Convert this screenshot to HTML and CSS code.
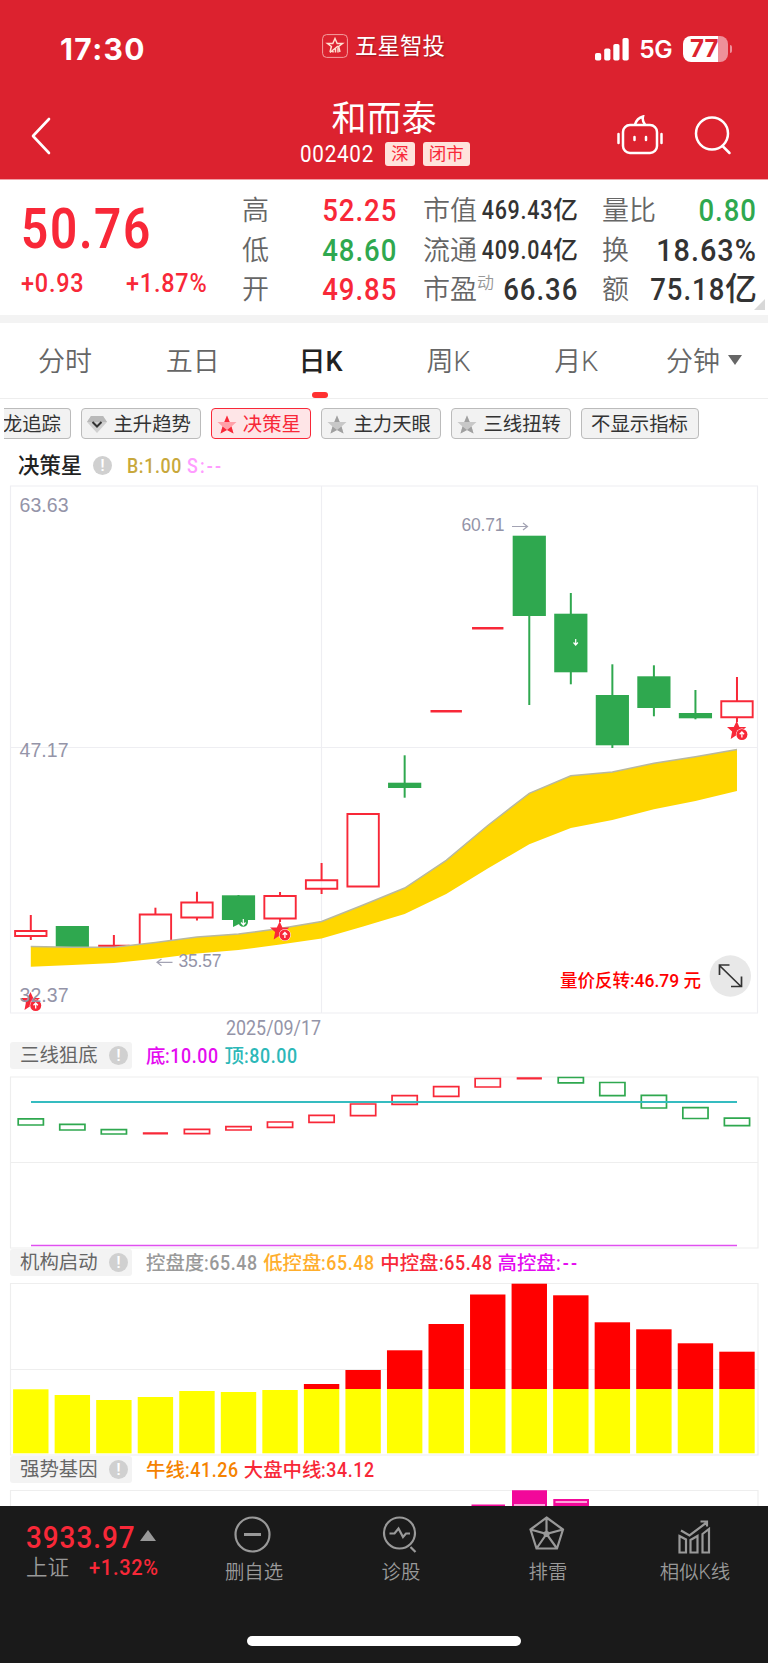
FILE: index.html
```html
<!DOCTYPE html>
<html lang="zh-CN">
<head>
    <meta charset="UTF-8">
    <meta name="viewport" content="width=device-width, initial-scale=1.0">
    <title>和而泰 002402</title>
    <link rel="stylesheet" href="styles.css">
</head>
<body>
    <div class="phone">
        <header class="top">
            <!-- 状态栏 -->
            <div class="status-bar">
                <span class="clock">17:30</span>
                <div class="app-name">
                    <svg width="26" height="24" viewBox="0 0 26 24" fill="none" stroke="#ffe0d0">
                        <rect x=".6" y=".6" width="24.8" height="22.8" rx="4" stroke="#f3a0a0"/>
                        <path d="M8 18l1.400-5.500L5.500 9.500h5.300L13 4.500l2.200 5h5.300l-3.900 3 1.400 5.500" stroke-width="1.500"/>
                        <path d="M8 18.500l8-6.500M11 18.500v-3M13.500 18.500v-4.500M16 18.500v-5" stroke-width="1.500"/>
                    </svg>
                    <span>五星智投</span>
                </div>
                <div class="phone-state">
                    <svg width="34" height="23" viewBox="0 0 34 23" fill="#fff">
                        <rect x="0" y="15" width="6.200" height="7.500" rx="1.800"/>
                        <rect x="9.200" y="10.500" width="6.200" height="12" rx="1.800"/>
                        <rect x="18.300" y="6" width="6.200" height="16.500" rx="1.800"/>
                        <rect x="27.500" y="0" width="6.200" height="22.500" rx="1.800"/>
                    </svg>
                    <span class="network">5G</span>
                    <span class="battery">77</span>
                </div>
            </div>

            <!-- 股票名称 -->
            <div class="title-bar">
                <svg class="back" width="20" height="38" viewBox="0 0 20 38" fill="none" stroke="#fff" stroke-width="2.600" stroke-linecap="round" stroke-linejoin="round">
                    <path d="M18 2L2 19l16 17"/>
                </svg>
                <div class="stock">
                    <h1>和而泰</h1>
                    <div class="stock-sub">
                        <span class="stock-code"><span class="din">002402</span></span>
                        <span class="tag">深</span>
                        <span class="tag">闭市</span>
                    </div>
                </div>
                <div class="actions">
                    <svg width="46" height="40" viewBox="0 0 46 40" fill="none" stroke="#fff" stroke-width="2.500" stroke-linecap="round">
                        <rect x="6" y="10" width="34" height="28" rx="7"/>
                        <path d="M18 9.500Q20 3 26 1.500Q25 6 28 9.500M1.500 19v9M44.500 19v9M17.500 22v3M29 22v3"/>
                    </svg>
                    <svg width="38" height="40" viewBox="0 0 38 40" fill="none" stroke="#fff" stroke-width="2.500" stroke-linecap="round">
                        <circle cx="18" cy="18.500" r="16"/>
                        <path d="M28.500 31l7 7"/>
                    </svg>
                </div>
            </div>
        </header>

        <!-- 行情 -->
        <section class="quote">
            <div class="quote-main">
                <div class="price"><span class="din">50.76</span></div>
                <div class="change">
                    <span class="din">+0.93</span>
                    <span class="din">+1.87%</span>
                </div>
            </div>
            <dl class="quote-col col-a">
                <div><dt>高</dt><dd class="up"><span class="din">52.25</span></dd></div>
                <div><dt>低</dt><dd class="down"><span class="din">48.60</span></dd></div>
                <div><dt>开</dt><dd class="up"><span class="din">49.85</span></dd></div>
            </dl>
            <dl class="quote-col col-b">
                <div><dt>市值</dt><dd class="small"><span class="din">469.43</span>亿</dd></div>
                <div><dt>流通</dt><dd class="small"><span class="din">409.04</span>亿</dd></div>
                <div><dt>市盈<sup>动</sup></dt><dd><span class="din">66.36</span></dd></div>
            </dl>
            <dl class="quote-col col-c">
                <div><dt>量比</dt><dd class="down"><span class="din">0.80</span></dd></div>
                <div><dt>换</dt><dd><span class="din wide">18.63%</span></dd></div>
                <div><dt>额</dt><dd><span class="din">75.18</span>亿</dd></div>
            </dl>
        </section>

        <nav class="tabs">
            <span>分时</span>
            <span>五日</span>
            <span class="active">日K</span>
            <span>周K</span>
            <span>月K</span>
            <span>分钟<i class="caret"></i></span>
        </nav>

        <!-- 指标选择 -->
        <div class="chips">
            <span class="chip chip-cut">龙追踪</span>
            <span class="chip">
                <svg width="20" height="19" viewBox="0 0 20 19"><path d="M4 1h12l4 6-10 11L0 7z" fill="#d0d0d0"/><path d="M4 1h12l4 6H0z" fill="#b9b9b9"/><path d="M5.500 7l4.500 4.500L14.500 7" fill="none" stroke="#333" stroke-width="2"/></svg>
                主升趋势
            </span>
            <span class="chip chip-on">
                <svg width="20" height="19" viewBox="0 0 20 19"><use href="#chip-star" fill="#ffa0a8"/><path d="M10 .5l2.700 6.500H7.300zM3.500 18.500l2-7L10 15zM16.500 18.500l-2-7L10 15z" fill="#f82838"/></svg>
                决策星
            </span>
            <span class="chip">
                <svg width="20" height="19" viewBox="0 0 20 19"><use href="#chip-star" fill="#c8c8c8"/><path d="M10 .5l2.700 6.500H7.300zM3.500 18.500l2-7L10 15zM16.500 18.500l-2-7L10 15z" fill="#a0a0a0"/></svg>
                主力天眼
            </span>
            <span class="chip">
                <svg width="20" height="19" viewBox="0 0 20 19"><use href="#chip-star" fill="#c8c8c8"/><path d="M10 .5l2.700 6.500H7.300zM3.500 18.500l2-7L10 15zM16.500 18.500l-2-7L10 15z" fill="#a0a0a0"/></svg>
                三线扭转
            </span>
            <span class="chip chip-off">不显示指标</span>
        </div>

        <div class="legend legend-main">
            <span class="legend-name">决策星</span><i class="info">!</i>
            <span class="values"><b class="gold"><span class="din">B:1.00</span></b><b class="pink"><span class="din dash">S:--</span></b></span>
        </div>

        <!-- K线主图 -->
        <svg class="chart" id="kline" width="768" height="556" viewBox="0 484 768 556">
            <defs>
                <path id="chip-star" d="M10 .5l2.700 6.500H19.500l-5 4.500 2 7-6.500-3.500-6.500 3.500 2-7L.5 7h6.800z"/>
                <g id="buy">
                    <path d="M0-9L2.700-3.100 9.600-2.900 4.400 1.500 6 8.500 0 5-6 9-4.600 1.500-9.700-2.900-2.900-3.100z" fill="#f82838"/>
                    <circle cx="5.200" cy="4.500" r="6" fill="#fff"/>
                    <circle cx="5.200" cy="4.500" r="5.500" fill="#f82838"/>
                    <path d="M5.200 7.500v-5M3 4.200l2.200-2.200 2.200 2.200" fill="none" stroke="#fff" stroke-width="1.300"/>
                </g>
            </defs>
            <path class="grid" d="M10.500 486H757.500V1013H10.500zM321.500 486V1013M10.500 747.500H757.500"/>
            <g id="candles"></g>
            <path id="band" fill="#ffd700"/>
            <path id="band-top" fill="none" stroke="#b8b8a0" stroke-width="1.500"/>
            <!-- 卖出标记，被K线遮住一半 -->
            <path d="M233 919h5l1 5-6 3zM238 919h10v3a4.800 4.800 0 0 1-9.600 0z" fill="#2fa84f"/>
            <path d="M243.300 919v6M241 922.500l2.300 2.500 2.300-2.500M575.700 639v6M573.500 642.500l2.200 2.500 2.200-2.500" fill="none" stroke="#fff" stroke-width="1.200"/>
            <use href="#buy" x="279.700" y="930.500"/>
            <use href="#buy" x="30.500" y="1001"/>
            <use href="#buy" x="736.700" y="730"/>
            <g class="axis">
                <text x="19.500" y="512" textLength="49">63.63</text>
                <text x="19.500" y="757" textLength="49">47.17</text>
                <text x="19.500" y="1002" textLength="49">32.37</text>
                <text class="mark" x="461.500" y="531" textLength="43">60.71</text>
                <text class="mark" x="178.500" y="967" textLength="43">35.57</text>
                <text class="date" x="226" y="1035" textLength="95" lengthAdjust="spacingAndGlyphs">2025/09/17</text>
            </g>
            <path d="M512 526.500h15M523 523l4.500 3.500-4.500 3.500M172.500 962.300H158M161.500 959l-4.500 3.300 4.500 3.500" fill="none" stroke="#a3a3b3" stroke-width="1.200"/>
            <text class="reversal" x="560" y="986.500" textLength="141" lengthAdjust="spacingAndGlyphs">量价反转:46.79 元</text>
            <circle cx="730.300" cy="976" r="20.700" fill="#e8e8e8"/>
            <path d="M719.500 965.500l21.500 21M719.500 975v-10h10M731 986.500h10.500v-10" fill="none" stroke="#333" stroke-width="1.700"/>
        </svg>

        <div class="legend">
            <span class="legend-box"><span>三线狙底</span><i class="info">!</i></span>
            <span class="values"><b class="magenta">底<span class="din">:10.00</span></b><b class="teal">顶<span class="din">:80.00</span></b></span>
        </div>
        <svg class="chart" width="768" height="174" viewBox="0 1075 768 174">
            <path class="grid grid-sub" d="M10.500 1077H758V1248H10.500zM10.500 1162.500H758"/>
            <g id="boxes"></g>
            <path d="M31 1102H737" stroke="#35bcc0" stroke-width="2"/>
            <path d="M31 1245.500H737" stroke="#e050f0" stroke-width="1.500"/>
        </svg>

        <div class="legend legend-tight">
            <span class="legend-box"><span>机构启动</span><i class="info">!</i></span>
            <span class="values"><b class="gray">控盘度<span class="din">:65.48</span></b><b class="orange">低控盘<span class="din">:65.48</span></b><b class="red">中控盘<span class="din">:65.48</span></b><b class="magenta">高控盘<span class="din dash">:--</span></b></span>
        </div>
        <svg class="chart" width="768" height="174" viewBox="0 1282 768 174">
            <path class="grid grid-sub" d="M10.500 1283.500H758V1455H10.500zM10.500 1369.500H758"/>
            <g id="bars"></g>
        </svg>

        <div class="legend legend-tight">
            <span class="legend-box"><span>强势基因</span><i class="info">!</i></span>
            <span class="values"><b class="amber">牛线<span class="din">:41.26</span></b><b class="red">大盘中线<span class="din">:34.12</span></b></span>
        </div>
        <svg class="chart" width="768" height="17" viewBox="0 1489 768 17">
            <path class="grid grid-sub" d="M10.500 1506V1490.500H758V1506"/>
            <path d="M471.500 1504.500h33.500v2h-33.500zM512 1490.300h35v16h-35zM553.300 1499h35.700v8h-35.700z" fill="#f2089a"/>
            <path d="M514 1505h31M555.500 1502h31.500" stroke="#ffd8f0" stroke-width="1.500"/>
        </svg>

        <!-- 底部工具栏 -->
        <footer class="bottom">
            <div class="index">
                <div class="index-price"><span class="din">3933.97</span><i class="rise"></i></div>
                <div class="index-sub"><span>上证</span><span class="din">+1.32%</span></div>
            </div>
            <div class="tool">
                <svg width="40" height="40" viewBox="0 0 40 40"><circle cx="18.500" cy="19.500" r="17"/><path d="M10 19.500h17" stroke-width="3"/></svg>
                <span>删自选</span>
            </div>
            <div class="tool">
                <svg width="40" height="40" viewBox="0 0 40 40"><circle cx="18.500" cy="18" r="15.500"/><path d="M8.500 18.500h5l4-5 4.500 8.500 3-3.500h4M29.500 32l5 5"/></svg>
                <span>诊股</span>
            </div>
            <div class="tool">
                <svg width="40" height="40" viewBox="0 0 40 40"><path d="M18.500 2.500L35 14.500 29 33.500H8.500L2.500 14.500zM18.500 2.500V19M35 14.500L18.500 19 29 33.500M8.500 33.500L18.500 19 2.500 14.500"/><circle cx="18.500" cy="19" r="2"/></svg>
                <span>排雷</span>
            </div>
            <div class="tool">
                <svg width="40" height="40" viewBox="0 0 40 40"><path d="M4.500 21l6.500 3.500V37.500H4.500zM15.500 25l7-4V37.500h-7zM27.500 19l6.500-5V37.500h-6.500zM6 15.500l8.500 5L31 8M25.500 6.500h6.500v5"/></svg>
                <span>相似K线</span>
            </div>
        </footer>
        <div class="home-indicator"></div>
    </div>

    <script>
        const RED = '#f82838', GREEN = '#2fa84f';
        const cx = i => 30.8 + 41.54 * i;

        // [颜色, 最高, 实体上沿, 实体下沿, 最低]
        const candles = [
            ['r', 915, 931, 936, 940], ['g', 926, 926, 948, 948], ['r', 935, 946, 946, 948],
            ['r', 907.7, 914.5, 950, 950], ['r', 891.7, 902.5, 917.5, 920.5], ['g', 895, 895.3, 920, 920],
            ['r', 892, 896, 918.5, 922], ['r', 863, 880.3, 888.7, 894], ['r', 814, 814, 886.5, 887],
            ['g', 755.3, 782.7, 788, 797.7], ['r', 711.3, 711.3, 711.3, 711.3], ['r', 628.2, 628.2, 628.2, 628.2],
            ['g', 536, 535.7, 616, 705], ['g', 593, 613.7, 672.3, 684.3], ['g', 664.3, 695, 745.3, 748],
            ['g', 665.3, 676.3, 708, 716.3], ['g', 690, 713, 718.3, 719.3], ['r', 677, 701.3, 717.3, 722]
        ];
        document.getElementById('candles').innerHTML = candles.map(([c, h, t, b, l], i) => {
            const x = cx(i);
            if (c === 'g') {
                return `<path d="M${x} ${h}V${l}" stroke="${GREEN}" stroke-width="2"/>
                    <rect x="${x - 16.6}" y="${t}" width="33.2" height="${b - t}" fill="${GREEN}"/>`;
            }
            return `<path d="M${x} ${h}V${t}M${x} ${b}V${l}" stroke="${RED}" stroke-width="2"/>
                <path d="M${x - 15.7} ${t}h31.4V${b}h-31.4z" fill="none" stroke="${RED}" stroke-width="${t === b ? 2.5 : 1.9}"/>`;
        }).join('');

        const upper = [946.5, 947.3, 947.3, 942.5, 937, 934, 928.5, 921.5, 905, 888, 860.3, 825.5, 793.3, 775.7, 772, 763.3, 756.7, 749.5];
        const lower = [966.7, 965, 963, 958.7, 953.5, 950, 944.5, 938.5, 926.5, 914, 894, 868.5, 844.3, 828, 820, 809.3, 801, 791];
        const top_ = upper.map((y, i) => `${cx(i)} ${y}`);
        const low_ = lower.map((y, i) => `${cx(i)} ${y}`).reverse();
        document.getElementById('band').setAttribute('d', 'M' + top_.concat(low_).join('L') + 'z');
        document.getElementById('band-top').setAttribute('d', 'M' + top_.join('L'));

        // 三线狙底
        const boxes = [
            ['g', 1118.9, 1125], ['g', 1124.3, 1130], ['g', 1129.6, 1134], ['r', 1133.3, 1133.3], ['r', 1129.3, 1133.7],
            ['r', 1126.7, 1130], ['r', 1122, 1127.3], ['r', 1115.3, 1122.3], ['r', 1104, 1115.7], ['r', 1095.7, 1104.3],
            ['r', 1086.7, 1096.3], ['r', 1078.5, 1087], ['r', 1078.3, 1078.3], ['g', 1077.5, 1082.8], ['g', 1082.5, 1095.7],
            ['g', 1095.3, 1108], ['g', 1107.7, 1118.5], ['g', 1118.2, 1125.7]
        ];
        document.getElementById('boxes').innerHTML = boxes.map(([c, t, b], i) =>
            `<path d="M${cx(i) - 12.6} ${t}h25.2V${b}h-25.2z" fill="none" stroke="${c === 'r' ? RED : GREEN}" stroke-width="${t === b ? 2.3 : 1.7}"/>`
        ).join('');

        // 机构启动
        const yellow = [1389.3, 1395, 1400, 1397, 1391, 1392, 1390];
        const red = [1384, 1370, 1350.3, 1324, 1294.5, 1283.7, 1295.3, 1322.3, 1329.3, 1343.3, 1351.7];
        let bars = '';
        for (let i = 0; i < 18; i++) {
            const y = yellow[i] || 1389;
            bars += `<rect x="${cx(i) - 17.7}" y="${y}" width="35.4" height="${1453.3 - y}" fill="#ff0"/>`;
            if (i > 6) {
                bars += `<rect x="${cx(i) - 17.7}" y="${red[i - 7]}" width="35.4" height="${1389 - red[i - 7]}" fill="#f00"/>`;
            }
        }
        document.getElementById('bars').innerHTML = bars;
    </script>
</body>
</html>
```

FILE: styles.css
```css
* {
    box-sizing: border-box;
}

body {
    margin: 0;
    background: #fff;
    font-family: Roboto, "Noto Sans CJK SC", sans-serif;
    color: #333;
}

h1, dl, dt, dd {
    margin: 0;
    font-weight: normal;
}

svg {
    display: block;
    flex: none;
}

.phone {
    position: relative;
    width: 768px;
    height: 1663px;
    overflow: hidden;
}

/* 窄体数字 */
.din {
    display: inline-block;
    font-family: Roboto, "Noto Sans CJK SC", sans-serif;
    letter-spacing: 0.035em;
    transform: scaleX(0.86);
    transform-origin: right center;
}

.din.wide {
    transform: scaleX(0.9);
}

/* 顶部 */
.top {
    height: 180px;
    background: #dc222f;
    border-bottom: 1px solid #f0a0a6;
    color: #fff;
}

.status-bar {
    display: grid;
    grid-template-columns: 1fr auto 1fr;
    align-items: center;
    height: 98px;
    padding: 0 36px 0 60px;
}

.clock {
    font-family: Inter, sans-serif;
    font-size: 30px;
    font-weight: 700;
    letter-spacing: 1.4px;
}

.app-name {
    display: flex;
    align-items: center;
    gap: 7px;
    margin-left: -25px;
    margin-top: -6px;
    font-size: 22.5px;
    line-height: 26px;
    text-shadow: 1px 1px 2px rgba(0, 0, 0, 0.3);
}

.phone-state {
    display: flex;
    align-items: center;
    justify-content: flex-end;
}

.network {
    margin: 0 11px 0 10px;
    font-family: Inter, sans-serif;
    font-size: 24.5px;
    font-weight: 600;
    letter-spacing: -0.5px;
}

.battery {
    position: relative;
    width: 45px;
    height: 26px;
    margin-right: 4px;
    border-radius: 8px;
    background: linear-gradient(to right, #fff 77%, #ee909a 77%);
    color: #dc222f;
    font-family: Inter, sans-serif;
    font-size: 24px;
    font-weight: 700;
    line-height: 26px;
    padding-left: 7px;
}

.battery::after {
    content: "";
    position: absolute;
    right: -4px;
    top: 9px;
    width: 2px;
    height: 8px;
    border-radius: 0 3px 3px 0;
    background: #ee909a;
}

.title-bar {
    display: grid;
    grid-template-columns: 1fr auto 1fr;
    height: 80px;
    padding: 0 36px 0 31px;
}

.back {
    margin-top: 19px;
}

.stock {
    margin-left: 5px;
}

.stock h1 {
    padding-top: 2px;
    font-size: 35px;
    font-weight: 400;
    line-height: 40px;
    text-align: center;
}

.stock-sub {
    display: flex;
    align-items: center;
    gap: 8px;
    height: 25px;
    margin-top: 1px;
}

.stock-code {
    width: 76px;
    margin-right: 3px;
    font-size: 24px;
    text-align: right;
}

.stock-code .din {
    margin-left: -20px;
}

.tag {
    height: 24px;
    padding: 0 6px;
    border-radius: 3px;
    background: #ffe4dc;
    color: #f82838;
    font-size: 17.5px;
    line-height: 24px;
}

.actions {
    display: flex;
    justify-content: flex-end;
    gap: 31px;
    padding-top: 17px;
}

/* 行情 */
.quote {
    position: relative;
    display: flex;
    height: 143px;
    border-bottom: 8px solid #f3f3f3;
}

.quote::after {
    content: "";
    position: absolute;
    right: 3px;
    bottom: 5px;
    border-left: 11px solid transparent;
    border-bottom: 11px solid #d8d8d8;
}

.quote-main {
    width: 222px;
    padding: 21px 0 0 21px;
    color: #f82838;
}

.quote-main .din {
    transform-origin: left center;
}

.price {
    height: 58px;
    font-size: 55.5px;
    font-weight: 600;
    line-height: 58px;
}

.change {
    display: grid;
    grid-template-columns: 105px auto;
    margin-top: 7px;
    font-size: 26px;
    font-weight: 500;
    line-height: 34px;
}

.change .din {
    transform: scaleX(0.9);
}

.quote-col {
    display: grid;
    grid-template-rows: repeat(3, 39.5px);
    align-content: start;
    padding-top: 10px;
    font-size: 27px;
    line-height: 40px;
}

.quote-col > div {
    display: flex;
    justify-content: space-between;
}

.quote-col dt {
    padding-top: 1px;
    color: #666;
    font-weight: 350;
    white-space: nowrap;
}

.quote-col dd {
    font-size: 32px;
    font-weight: 500;
    white-space: nowrap;
}

.quote-col dd.small {
    padding-top: 1px;
    font-size: 25px;
}

.quote-col dd .din {
    margin-left: -30px;
}

.quote-col sup {
    font-size: 17px;
    line-height: 0;
    color: #999;
}

.col-a {
    width: 155px;
    margin-left: 20px;
}

.col-b {
    width: 155px;
    margin-left: 26px;
}

.col-c {
    width: 155px;
    margin-left: 24px;
}

.up {
    color: #f82838;
}

.down {
    color: #2fa84f;
}

.tabs {
    display: grid;
    grid-template-columns: repeat(6, 1fr);
    height: 76px;
    padding-left: 1px;
    border-bottom: 1px solid #eee;
    color: #666;
    font-size: 27px;
    font-weight: 350;
    line-height: 79px;
    text-align: center;
}

.tabs .active {
    position: relative;
    color: #222;
    font-weight: 500;
}

.tabs .active::after {
    content: "";
    position: absolute;
    left: 55px;
    bottom: 4px;
    width: 16px;
    height: 6px;
    border-radius: 3px;
    background: #ff3030;
}

.caret {
    display: inline-block;
    margin-left: 8px;
    vertical-align: 6px;
    border: 7px solid transparent;
    border-top: 10px solid #666;
    border-bottom: 0;
}

/* 指标选择 */
.chips {
    display: flex;
    gap: 10px;
    height: 48px;
    margin-left: 4px;
    padding-top: 9px;
    overflow: hidden;
}

.chip {
    display: flex;
    align-items: center;
    justify-content: space-between;
    flex: none;
    width: 120px;
    height: 31px;
    padding: 2px 9px 0 5px;
    border: 1.5px solid #bbb;
    border-radius: 4px;
    background: #f2f2f2;
    font-size: 19.4px;
    line-height: 28px;
    white-space: nowrap;
}

.chip-cut {
    width: 67px;
    padding: 2px 9px 0 0;
    border-left: 0;
    border-radius: 0 4px 4px 0;
    justify-content: flex-end;
}

.chip-on {
    width: 100px;
    border-color: #f82838;
    background: #fee5e7;
    color: #f82838;
}

.chip-off {
    width: 118px;
    padding: 2px 9px 0;
}

/* 图例 */
.legend {
    display: flex;
    height: 35px;
    padding: 2px 0 0 10px;
    font-size: 19.4px;
    line-height: 28px;
}

.legend-tight {
    height: 33px;
    padding-top: 0;
}

.legend-box {
    display: flex;
    align-items: center;
    justify-content: space-between;
    width: 122px;
    height: 27px;
    margin-right: 14px;
    padding: 0 4px 0 10px;
    border-radius: 3px;
    background: #f3f3f3;
    color: #666;
}

.legend-main {
    height: 37px;
    align-items: center;
    padding: 0 0 0 18px;
}

.legend-name {
    width: 75px;
    font-size: 21.4px;
    font-weight: 500;
    color: #222;
}

.legend-main .values {
    margin-left: 15px;
    padding-top: 2px;
}

.info {
    width: 19px;
    height: 19px;
    border-radius: 50%;
    background: #d0d0d0;
    color: #fff;
    font-size: 17px;
    font-style: normal;
    font-weight: 500;
    line-height: 19px;
    text-align: center;
}

.values {
    display: flex;
    gap: 4.5px;
}

.values b {
    font-weight: 500;
    white-space: nowrap;
}

.values .din {
    font-size: 20px;
    transform: scaleX(0.89);
    transform-origin: left center;
    margin-right: -6px;
}

.values .dash {
    letter-spacing: 0.12em;
}

.gold { color: #c8a83c; }
.pink { color: #ff9cff; }
.magenta { color: #e40cf0; }
.teal { color: #2cb8b8; }
.gray { color: #999; }
.orange { color: #ffae2c; }
.red { color: #f82838; }
.amber { color: #f58200; }

/* 图表 */
.grid {
    fill: none;
    stroke: #eeeef2;
    stroke-width: 1.2;
}

.grid-sub {
    stroke: #eee;
}

.axis text {
    fill: #9494a8;
    font-family: "Liberation Sans", sans-serif;
    font-size: 19.5px;
}

.axis .mark {
    font-size: 17.5px;
}

.axis .date {
    font-family: Roboto, sans-serif;
    font-size: 20px;
}

.reversal {
    fill: #f00;
    font-size: 18px;
    font-weight: 500;
}

/* 底部 */
.bottom {
    display: grid;
    grid-template-columns: 180.5px repeat(4, 147px);
    height: 157px;
    background: #1a1a1a;
    color: #999;
}

.index {
    padding: 14px 0 0 26px;
}

.index .din {
    transform-origin: left center;
    color: #f82838;
}

.index-price {
    display: flex;
    align-items: center;
    font-size: 32px;
    font-weight: 500;
    line-height: 34px;
}

.index-price .din {
    transform: scaleX(0.87);
}

.rise {
    margin-left: -12px;
    margin-top: -3px;
    border: 8px solid transparent;
    border-bottom: 11px solid #999;
    border-top: 0;
}

.index-sub {
    display: flex;
    gap: 20px;
    font-size: 21.5px;
    font-weight: 350;
    line-height: 28px;
}

.index-sub .din {
    font-size: 22px;
    font-weight: 500;
    transform: scaleX(0.91);
}

.tool {
    display: flex;
    flex-direction: column;
    align-items: center;
    padding-top: 9px;
    font-size: 19.4px;
    font-weight: 350;
    line-height: 30px;
}

.tool svg {
    margin-bottom: 3px;
    fill: none;
    stroke: #999;
    stroke-width: 2.2;
}

.home-indicator {
    position: absolute;
    left: 247px;
    bottom: 17px;
    width: 274px;
    height: 10px;
    border-radius: 5px;
    background: #fff;
}
```
